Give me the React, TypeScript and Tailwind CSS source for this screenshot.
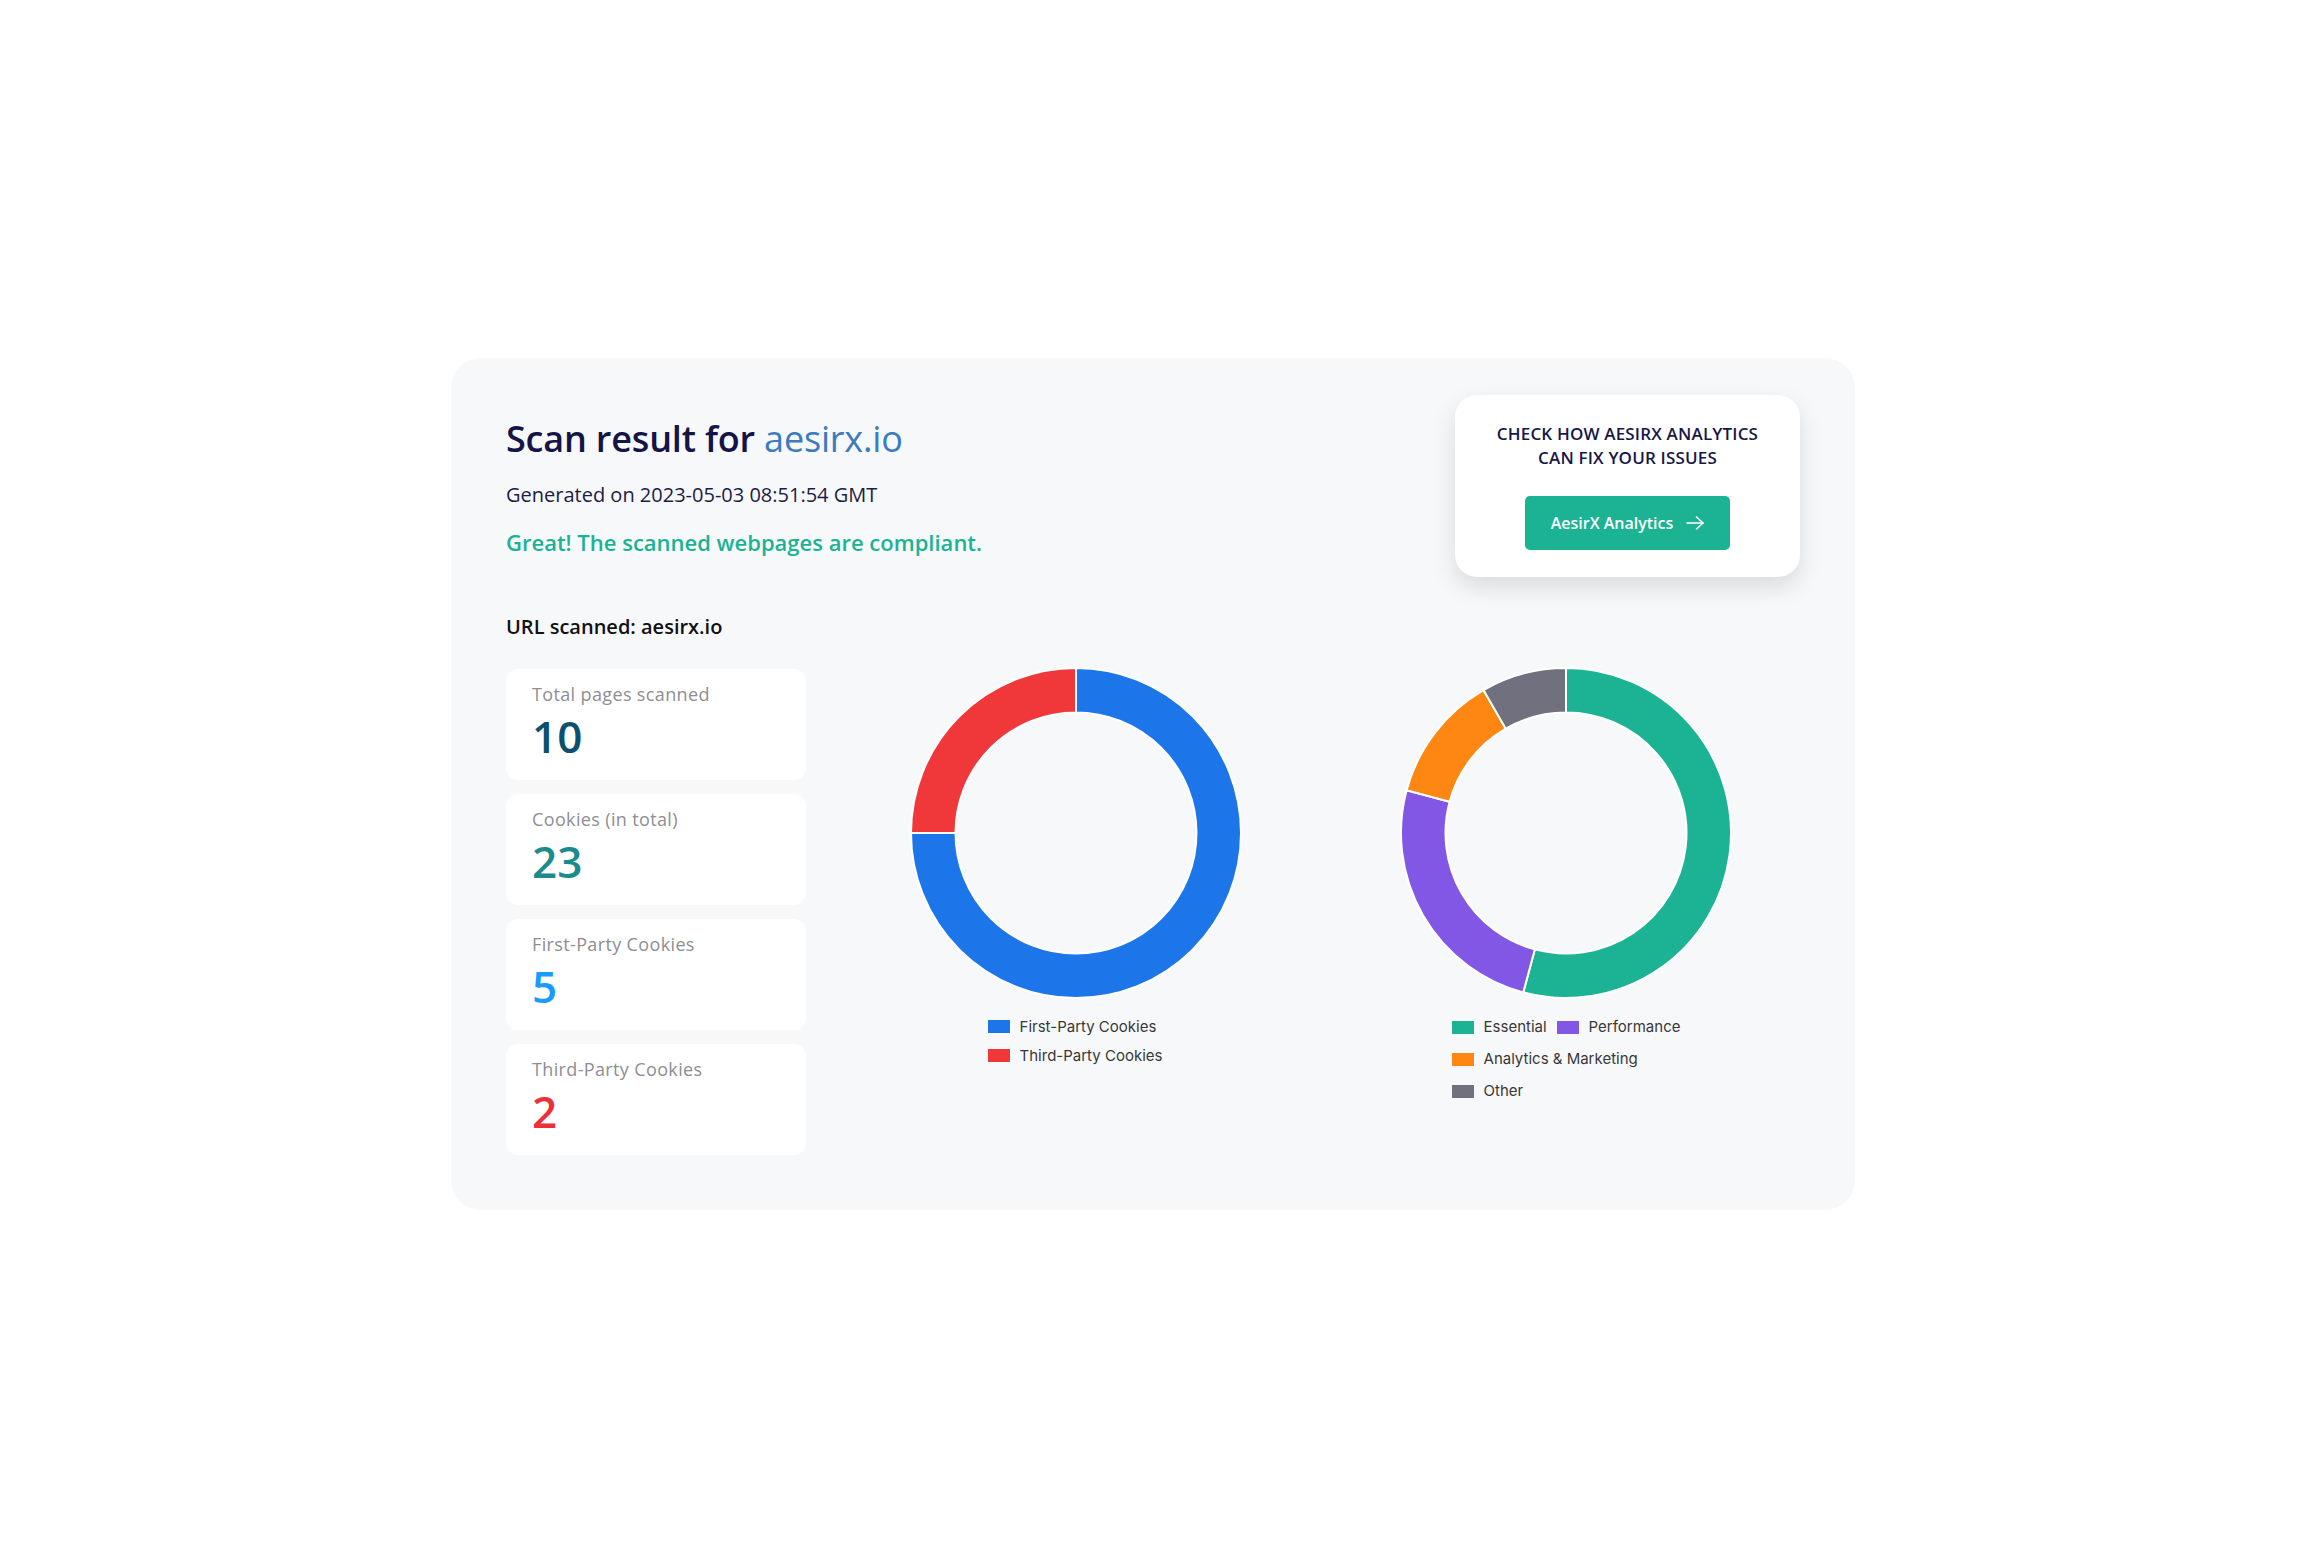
import React from 'react';

type Slice = { color: string; from: number; to: number };

const CX = 166;
const CY = 166;
const R_OUT = 165;
const R_IN = 120.5;

const pt = (r: number, a: number) => {
  const rad = (a * Math.PI) / 180;
  return `${(CX + r * Math.sin(rad)).toFixed(2)} ${(CY - r * Math.cos(rad)).toFixed(2)}`;
};

const ringPath = (a0: number, a1: number) => {
  const large = a1 - a0 > 180 ? 1 : 0;
  return [
    `M ${pt(R_OUT, a0)}`,
    `A ${R_OUT} ${R_OUT} 0 ${large} 1 ${pt(R_OUT, a1)}`,
    `L ${pt(R_IN, a1)}`,
    `A ${R_IN} ${R_IN} 0 ${large} 0 ${pt(R_IN, a0)}`,
    'Z',
  ].join(' ');
};

const Donut: React.FC<{ slices: Slice[] }> = ({ slices }) => (
  <svg width="332" height="332" viewBox="0 0 332 332">
    {slices.map((s) => (
      <path key={s.color} d={ringPath(s.from, s.to)} fill={s.color} stroke="#ffffff" strokeWidth="2" />
    ))}
  </svg>
);

const LegendItem: React.FC<{ color: string; label: string }> = ({ color, label }) => (
  <span className="flex items-center gap-[10px]">
    <span className="w-[22px] h-[13px] shrink-0" style={{ backgroundColor: color }} />
    <span>{label}</span>
  </span>
);

const stats = [
  { label: 'Total pages scanned', value: '10', color: 'text-[#0d4f6e]' },
  { label: 'Cookies (in total)', value: '23', color: 'text-[#1b8b8c]' },
  { label: 'First-Party Cookies', value: '5', color: 'text-[#1a9cfd]' },
  { label: 'Third-Party Cookies', value: '2', color: 'text-[#ee2f3a]' },
];

const partySlices: Slice[] = [
  { color: '#1c76e9', from: 0, to: 270 },
  { color: '#f0383b', from: 270, to: 360 },
];

const categorySlices: Slice[] = [
  { color: '#1bb394', from: 0, to: 195 },
  { color: '#8257e6', from: 195, to: 285 },
  { color: '#fe8612', from: 285, to: 330 },
  { color: '#70707e', from: 330, to: 360 },
];

export default function App() {
  return (
    <div className="min-h-screen w-full bg-white flex items-center justify-center font-['Open_Sans',sans-serif]">
      <div className="w-[1404px] rounded-[30px] bg-[#f7f8fa] px-[55px] pt-[37px] pb-[55px]">
        <div className="flex justify-between items-start">
          <div className="pt-[22px]">
            <h1 className="text-[36px] leading-[43px] font-semibold tracking-[-0.005em] text-[#141446]">
              Scan result for <span className="font-normal text-[#3b7bc0]">aesirx.io</span>
            </h1>
            <p className="mt-[20px] text-[20px] leading-[30px] text-[#1c1c45]">Generated on 2023-05-03 08:51:54 GMT</p>
            <p className="mt-[16px] text-[22px] leading-[33px] font-semibold text-[#1ab394]">
              Great! The scanned webpages are compliant.
            </p>
          </div>

          <div className="w-[345px] h-[182px] shrink-0 rounded-[22px] bg-white shadow-[0_10px_24px_rgba(0,0,0,0.12)] pt-[27px] flex flex-col items-center">
            <p className="text-center text-[17px] leading-[24px] font-semibold tracking-[0.01em] text-[#17174a]">
              CHECK HOW AESIRX ANALYTICS
              <br />
              CAN FIX YOUR ISSUES
            </p>
            <button className="mt-[26px] w-[205px] h-[54px] rounded-[5px] bg-[#1bb394] text-white text-[16px] font-semibold flex items-center justify-center gap-[13px]">
              AesirX Analytics
              <svg width="18" height="14" viewBox="0 0 18 14" fill="none" stroke="currentColor" strokeWidth="1.6" strokeLinecap="round" strokeLinejoin="round">
                <path d="M1 7h16" />
                <path d="M10.5 1l6.5 6-6.5 6" />
              </svg>
            </button>
          </div>
        </div>

        <p className="mt-[35px] text-[20px] leading-[30px] font-semibold text-[#111111]">URL scanned: aesirx.io</p>

        <div className="mt-[27px] flex items-start">
          <div className="w-[300px] shrink-0 flex flex-col gap-[14px]">
            {stats.map((s) => (
              <div key={s.label} className="h-[111px] rounded-[12px] bg-white px-[26px] pt-[12px]">
                <p className="text-[18px] leading-[27px] font-medium tracking-[0.02em] text-[#8e8e94]">{s.label}</p>
                <p className={`mt-[6px] text-[44px] leading-[44px] font-semibold ${s.color}`}>{s.value}</p>
              </div>
            ))}
          </div>

          <div className="ml-[25px] -mt-[2px] flex shrink-0 font-['Inter',sans-serif] text-[15px] text-[#383838]">
            <div className="w-[490px] shrink-0 flex flex-col items-center">
              <Donut slices={partySlices} />
              <div className="mt-[13px] -ml-[2px] flex flex-col items-start leading-[29px]">
                <LegendItem color="#1c76e9" label="First-Party Cookies" />
                <LegendItem color="#f0383b" label="Third-Party Cookies" />
              </div>
            </div>
            <div className="w-[490px] shrink-0 flex flex-col items-center">
              <Donut slices={categorySlices} />
              <div className="mt-[12px] flex flex-col items-start leading-[32px]">
                <div className="flex items-center gap-[10px]">
                  <LegendItem color="#1bb394" label="Essential" />
                  <LegendItem color="#8257e6" label="Performance" />
                </div>
                <LegendItem color="#fe8612" label="Analytics & Marketing" />
                <LegendItem color="#70707e" label="Other" />
              </div>
            </div>
          </div>
        </div>
      </div>
    </div>
  );
}
